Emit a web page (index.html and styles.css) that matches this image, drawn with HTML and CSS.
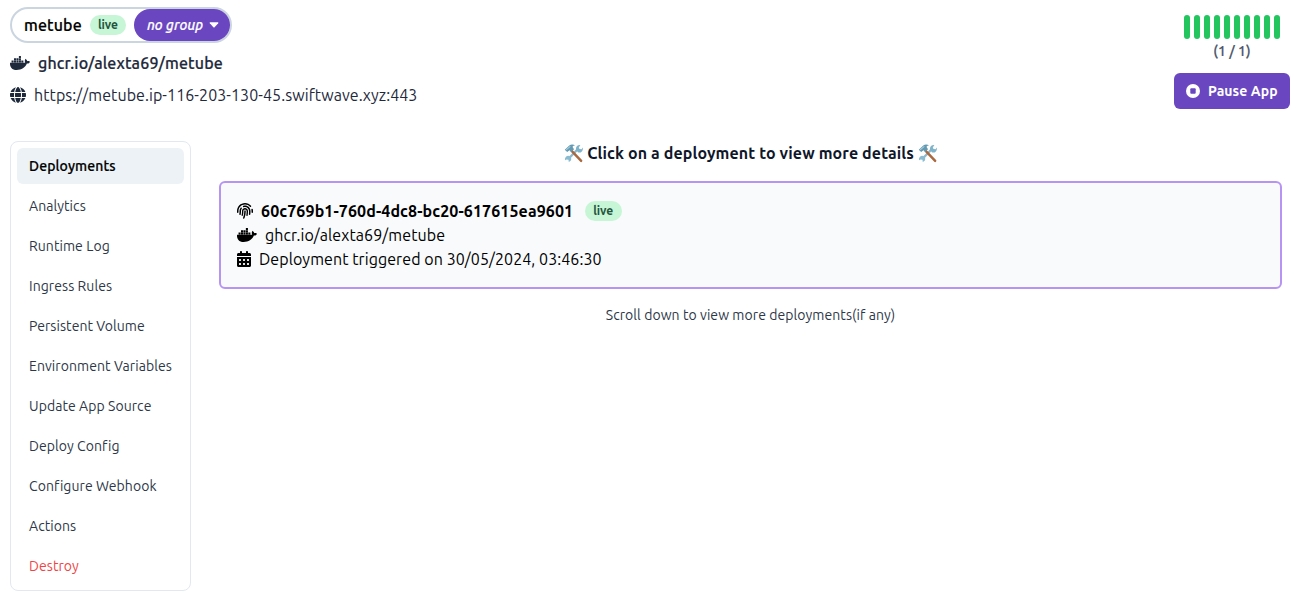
FILE: index.html
```html
<!DOCTYPE html>
<html lang="en">
<head>
<meta charset="utf-8">
<title>metube</title>
<link rel="stylesheet" href="styles.css">
</head>
<body>
<svg class="defs" width="0" height="0">
  <symbol id="docker" viewBox="0 0 640 512"><path d="M349.9 236.3h-66.1v-59.4h66.1v59.4zm0-204.3h-66.1v60.7h66.1V32zm78.2 144.8H362v59.4h66.1v-59.4zm-156.3-72.1h-66.1v60.1h66.1v-60.1zm78.1 0h-66.1v60.1h66.1v-60.1zm276.8 100c-14.4-9.7-47.6-13.2-73.1-8.4-3.3-24-16.7-44.9-41.1-63.7l-14-9.3-9.3 14c-18.4 27.8-23.4 73.6-3.7 103.8-8.7 4.7-25.8 11.1-48.4 10.7H2.4c-8.7 50.8 5.8 116.8 44 162.1 37.1 43.9 92.7 66.2 165.4 66.2 157.4 0 273.9-72.5 328.4-204.2 21.4.4 67.6.1 91.3-45.2 1.5-2.5 6.6-13.2 8.5-17.1l-13.3-8.9zm-511.1-27.9h-66v59.4h66.1v-59.4zm78.1 0h-66.1v59.4h66.1v-59.4zm78.1 0h-66.1v59.4h66.1v-59.4zm-78.1-72.1h-66.1v60.1h66.1v-60.1z"/></symbol>
  <symbol id="tools" viewBox="0 0 36 36">
    <path d="M9 27.5 25.500 10.500" stroke="#8fb9cc" stroke-width="4.500"/>
    <path d="M2 27a6.500 6.500 0 0 1 8-4.500l3.500 4a6.500 6.500 0 0 1-4.500 7.500l-.5-4-3.500-.8-3 1.800z" fill="#8abbd0"/>
    <path d="M23 12c-1.500-6 2-10.500 8-10l-3 4.500 1.500 3 4 .5 2-3.500c1.500 6-3 11-8.500 9.500z" fill="#7fb3ca"/>
    <path d="m14.500 13 18 19" stroke="#a9683f" stroke-width="4.600" stroke-linecap="round"/>
    <path d="M1.500 11 10 3c3-2.500 8-2.500 11 0-3-.5-5 1-4.500 3l2.500 4-5.500 5-3-3-4.500 3z" fill="#6299b3"/>
    <path d="m4 11 8-6.500" stroke="#a9cfdf" stroke-width="2"/>
  </symbol>
</svg>
<header class="header">
  <div class="info">
    <div class="title-pill">
      <span class="app-name">metube</span>
      <span class="badge">live</span>
      <button class="group"><span class="group-name">no group</span><svg class="caret" viewBox="0 0 10 6"><path d="M1.200.3h7.600q1 0 .4.900L5.600 5.300q-.6.500-1.200 0L.8 1.200Q.2.300 1.200.3z"/></svg></button>
    </div>
    <div class="meta image"><svg class="ic-docker"><use href="#docker"/></svg><span class="image-name">ghcr.io/alexta69/metube</span></div>
    <div class="meta url"><svg class="ic-globe" viewBox="0 0 512 512"><path d="M352 256c0 22.2-1.2 43.6-3.3 64H163.3c-2.200-20.400-3.300-41.800-3.300-64s1.200-43.600 3.300-64H348.700c2.200 20.400 3.300 41.800 3.300 64zm28.800-64H503.900c5.300 20.500 8.100 41.900 8.100 64s-2.800 43.500-8.100 64H380.800c2.100-20.600 3.200-42 3.200-64s-1.100-43.400-3.200-64zm112.600-32H376.700c-10-63.900-29.800-117.400-55.300-151.600c78.300 20.700 142 77.500 171.900 151.600zm-149.100 0H167.700c6.100-36.400 15.500-68.600 27-94.700c10.500-23.600 22.200-40.700 33.500-51.500C239.400 3.200 248.700 0 256 0s16.600 3.200 27.800 13.800c11.300 10.800 23 27.900 33.500 51.500c11.600 26 20.900 58.200 27 94.700zm-209 0H18.600C48.600 85.900 112.200 29.100 190.600 8.400C165.100 42.600 145.300 96.100 135.300 160zM8.100 192H131.200c-2.100 20.600-3.200 42-3.200 64s1.100 43.400 3.200 64H8.100C2.800 299.500 0 278.100 0 256s2.800-43.500 8.100-64zM194.700 446.600c-11.600-26-20.900-58.200-27-94.600H344.300c-6.100 36.400-15.500 68.600-27 94.600c-10.500 23.600-22.200 40.700-33.500 51.500C272.600 508.800 263.300 512 256 512s-16.600-3.200-27.800-13.800c-11.300-10.800-23-27.900-33.500-51.500zM135.300 352c10 63.900 29.800 117.400 55.300 151.600C112.200 482.900 48.600 426.100 18.600 352H135.300zm358.100 0c-30 74.100-93.600 130.900-171.900 151.600c25.500-34.200 45.200-87.700 55.300-151.600H493.400z"/></svg><span class="url-text">https://metube.ip-116-203-130-45.swiftwave.xyz:443</span></div>
  </div>
  <div class="status">
    <div class="bars"><i></i><i></i><i></i><i></i><i></i><i></i><i></i><i></i><i></i><i></i></div>
    <div class="count">(1 / 1)</div>
    <button class="pause"><svg class="ic-stop" viewBox="0 0 14 14"><circle cx="7" cy="7" r="7"/><rect class="hole" x="4.300" y="4.300" width="5.400" height="5.400" rx=".9"/></svg><span class="pause-text">Pause App</span></button>
  </div>
</header>
<main class="main">
  <nav class="nav">
    <a class="item active"><span>Deployments</span></a>
    <a class="item"><span>Analytics</span></a>
    <a class="item"><span>Runtime Log</span></a>
    <a class="item"><span>Ingress Rules</span></a>
    <a class="item"><span>Persistent Volume</span></a>
    <a class="item"><span>Environment Variables</span></a>
    <a class="item"><span>Update App Source</span></a>
    <a class="item"><span>Deploy Config</span></a>
    <a class="item"><span>Configure Webhook</span></a>
    <a class="item"><span>Actions</span></a>
    <a class="item danger"><span>Destroy</span></a>
  </nav>
  <section class="content">
    <h1 class="heading"><svg class="ic-tools"><use href="#tools"/></svg><span class="heading-text">Click on a deployment to view more details</span><svg class="ic-tools"><use href="#tools"/></svg></h1>
    <article class="card">
      <div class="row id"><svg class="ic-finger" viewBox="0 0 512 512"><path d="M48 256C48 141.100 141.100 48 256 48c63.100 0 119.600 28.100 157.800 72.500c8.600 10.100 23.800 11.200 33.800 2.600s11.200-23.800 2.600-33.800C403.300 34.600 333.700 0 256 0C114.600 0 0 114.600 0 256v40c0 13.300 10.700 24 24 24s24-10.700 24-24V256zm458.500-52.900c-2.700-13-15.500-21.300-28.400-18.500s-21.300 15.500-18.500 28.400c2.900 13.900 4.500 28.300 4.500 43.100v40c0 13.300 10.700 24 24 24s24-10.700 24-24V256c0-18.100-1.900-35.800-5.500-52.900zM256 80c-19 0-37.400 3-54.500 8.600c-15.200 5-18.700 23.700-8.300 35.900c7.100 8.300 18.800 10.800 29.400 7.900c10.600-2.900 21.800-4.400 33.400-4.400c70.700 0 128 57.300 128 128v24.900c0 25.200-1.500 50.300-4.400 75.300c-1.700 14.600 9.400 27.800 24.200 27.800c11.800 0 21.900-8.600 23.300-20.300c3.300-27.400 5-55 5-82.700V256c0-97.200-78.800-176-176-176zM150.700 148.700c-9.100-10.600-25.300-11.400-33.900-.4C93.700 178 80 215.400 80 256v24.900c0 24.200-2.600 48.400-7.800 71.900C68.800 368.400 80.100 384 96.100 384c10.500 0 19.900-7 22.200-17.300c6.400-28.100 9.700-56.800 9.700-85.800V256c0-27.200 8.500-52.400 22.900-73.100c7.200-10.400 8-24.600-.2-34.200zM256 160c-53 0-96 43-96 96v24.900c0 35.900-4.600 71.500-13.800 106.100c-3.800 14.300 6.700 29 21.500 29c9.500 0 17.900-6.200 20.400-15.400c10.500-39 15.900-79.200 15.900-119.700V256c0-28.700 23.300-52 52-52s52 23.300 52 52v24.900c0 36.300-3.500 72.400-10.400 107.900c-2.700 13.900 7.700 27.200 21.800 27.200c10.200 0 19-7 21-17c7.700-38.800 11.600-78.300 11.600-118.100V256c0-53-43-96-96-96zm24 96c0-13.300-10.700-24-24-24s-24 10.700-24 24v24.900c0 59.900-11 119.300-32.500 175.200l-5.900 15.300c-4.800 12.400 1.400 26.300 13.800 31s26.300-1.400 31-13.800l5.900-15.300C267.900 411.900 280 346.700 280 280.900V256z"/></svg><span class="id-text">60c769b1-760d-4dc8-bc20-617615ea9601</span><span class="badge">live</span></div>
      <div class="row"><svg class="ic-docker"><use href="#docker"/></svg><span class="row-image">ghcr.io/alexta69/metube</span></div>
      <div class="row"><svg class="ic-cal" viewBox="0 0 448 512"><path d="M128 0c17.700 0 32 14.300 32 32V64H288V32c0-17.700 14.300-32 32-32s32 14.300 32 32V64h48c26.500 0 48 21.500 48 48v48H0V112C0 85.500 21.500 64 48 64H96V32c0-17.700 14.300-32 32-32zM0 192H448V464c0 26.500-21.500 48-48 48H48c-26.500 0-48-21.500-48-48V192zm64 80v32c0 8.800 7.200 16 16 16h32c8.800 0 16-7.200 16-16V272c0-8.800-7.200-16-16-16H80c-8.800 0-16 7.200-16 16zm128 0v32c0 8.800 7.200 16 16 16h32c8.800 0 16-7.200 16-16V272c0-8.800-7.200-16-16-16H208c-8.800 0-16 7.200-16 16zm144-16c-8.800 0-16 7.200-16 16v32c0 8.800 7.200 16 16 16h32c8.800 0 16-7.200 16-16V272c0-8.800-7.200-16-16-16H336zM64 400v32c0 8.800 7.200 16 16 16h32c8.800 0 16-7.200 16-16V400c0-8.800-7.200-16-16-16H80c-8.800 0-16 7.200-16 16zm144-16c-8.800 0-16 7.200-16 16v32c0 8.800 7.200 16 16 16h32c8.800 0 16-7.200 16-16V400c0-8.800-7.200-16-16-16H208zm112 16v32c0 8.800 7.200 16 16 16h32c8.800 0 16-7.200 16-16V400c0-8.800-7.200-16-16-16H336c-8.800 0-16 7.200-16 16z"/></svg><span class="row-date">Deployment triggered on 30/05/2024, 03:46:30</span></div>
    </article>
    <p class="hint"><span class="hint-text">Scroll down to view more deployments(if any)</span></p>
  </section>
</main>
</body>
</html>
```
FILE: styles.css
```css
* { box-sizing: border-box; }
body { margin: 0; padding: 7px 10px 0; background: #fff; color: #000; font: 16px/24px Ubuntu, "Noto Sans", sans-serif; letter-spacing: .07px; }
span { white-space: nowrap; }
svg { fill: currentColor; flex: none; display: block; }
button { border: 0; font: inherit; letter-spacing: inherit; color: #fff; background: #6b46c1; }
.defs { position: absolute; }

.header { display: flex; justify-content: space-between; height: 134px; }
.title-pill { display: flex; align-items: center; width: 222px; height: 36px; border: 2px solid #cbd5e0; border-radius: 18px; padding-left: 12px; }
.app-name, .image-name, .group-name, .count, .active { font-weight: 500; -webkit-text-stroke: .2px currentColor; }
.app-name { width: 58px; margin-right: 8px; letter-spacing: .12px; }
.badge { display: flex; align-items: center; justify-content: center; width: 36px; height: 20px; border-radius: 10px; background: #c6f6d5; color: #22543d; font-size: 12px; line-height: 16px; font-weight: 700; letter-spacing: 0; }
.group { display: flex; align-items: center; margin-left: 8px; width: 96px; height: 32px; border-radius: 16px; padding: 0 0 0 12.5px; font-size: 14px; font-style: italic; }
.group-name { width: 57px; }
.caret { width: 10px; height: 6px; margin-left: 5px; }
.meta { display: flex; align-items: center; height: 24px; color: #1e293b; }
.image { margin-top: 8px; }
.image-name { letter-spacing: .16px; }
.url { margin-top: 8px; }
.ic-docker { width: 20px; height: 16px; margin-right: 8px; }
.ic-globe { width: 16px; height: 16px; margin-right: 8px; }

.status { display: flex; flex-direction: column; align-items: center; width: 116px; padding-top: 8px; }
.bars { display: flex; gap: 4px; height: 24px; }
.bars i { width: 6px; border-radius: 3px; background: #22c55e; }
.count { font-size: 14px; line-height: 20px; margin-top: 2px; color: #4a5568; }
.pause { display: flex; align-items: center; width: 116px; height: 36px; margin-top: 12px; border-radius: 6px; padding: 0 0 0 12px; font-size: 14px; font-weight: 700; }
.ic-stop { width: 14px; height: 14px; margin-right: 8px; }
.hole { fill: #6b46c1; }

.main { display: flex; align-items: flex-start; }
.nav { display: flex; flex-direction: column; gap: 4px; width: 181px; height: 450px; padding: 6px; border: 1px solid #e2e8f0; border-radius: 8px; }
.item { display: flex; align-items: center; height: 36px; padding: 0 12px; border-radius: 6px; font-size: 14px; color: #2d3748; }
.active { background: #edf2f7; color: #000; letter-spacing: .12px; }
.danger { color: #ef4444; }
.content { width: 1063px; margin-left: 28px; }
.heading { display: flex; justify-content: center; align-items: center; gap: 4px; height: 24px; margin: 0 0 16px; font-size: 16px; font-weight: 700; color: #0f172a; letter-spacing: .11px; }
.ic-tools { width: 19px; height: 19px; }
.card { height: 108px; border: 2px solid #b794f4; border-radius: 6px; background: #f8fafc; padding: 16px; }
.row { display: flex; align-items: center; height: 24px; }
.row-image { letter-spacing: .1px; }
.id { font-weight: 700; }
.id-text { letter-spacing: .11px; }
.id .badge { margin-left: 11.5px; width: 37px; }
.ic-finger { width: 16px; height: 16px; margin-right: 8px; }
.ic-cal { width: 14px; height: 16px; margin-right: 8px; }
.hint { display: flex; justify-content: center; margin: 16px 0 0; font-size: 14px; line-height: 20px; color: #2d3748; }
```
